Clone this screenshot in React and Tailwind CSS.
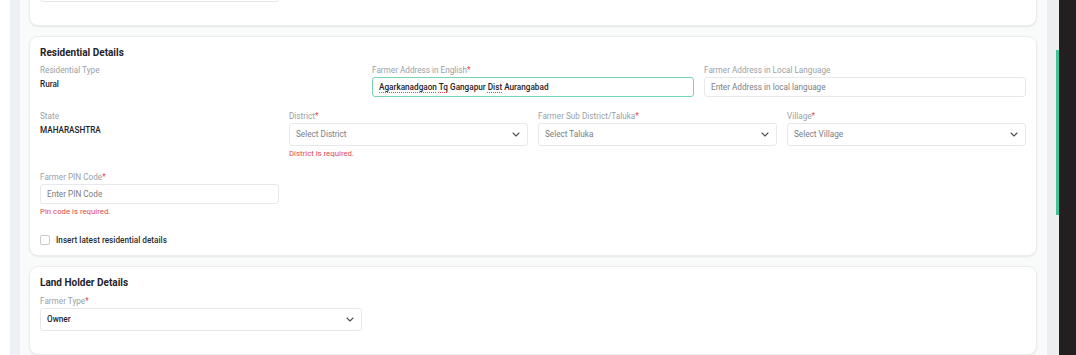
import React from "react";

const Chevron = () => (
  <svg width="8" height="5" viewBox="0 0 8 5" className="shrink-0">
    <polyline points="1,1 4,4 7,1" fill="none" stroke="#4b5058" strokeWidth="1.1" strokeLinecap="round" strokeLinejoin="round" />
  </svg>
);

const Label = ({ children, req }) => (
  <div className="h-[10px] text-[8.2px] leading-[10px] text-[#9a9fa6] mb-[2px] whitespace-nowrap">
    {children}
    {req && <span className="text-[#e5484d]">*</span>}
  </div>
);

const Input = ({ placeholder, value, focus }) => (
  <div
    className={`h-[20px] flex items-center rounded-[3px] border bg-white pl-[6px] text-[8.2px] ${
      focus ? "border-[#74d6b1]" : "border-[#e6e8eb]"
    }`}
  >
    {value ? (
      <span className="text-[#1f2328] font-medium">{value}</span>
    ) : (
      <span className="text-[#7a7e84]">{placeholder}</span>
    )}
  </div>
);

const Select = ({ placeholder, value }) => (
  <div className="h-[23px] flex items-center justify-between rounded-[3px] border border-[#e6e8eb] bg-white pl-[6px] pr-[7px] text-[8.2px]">
    {value ? (
      <span className="text-[#1f2328] font-medium">{value}</span>
    ) : (
      <span className="text-[#7a7e84]">{placeholder}</span>
    )}
    <Chevron />
  </div>
);

const Err = ({ children }) => (
  <div className="mt-[3px] h-[10px] text-[7.8px] leading-[10px] text-[#e5484d]">{children}</div>
);

const Card = ({ children, className = "" }) => (
  <div className={`rounded-[9px] border border-[#ececee] bg-white shadow-[0_1px_2px_rgba(0,0,0,0.08)] px-[10px] ${className}`}>
    {children}
  </div>
);

const Title = ({ children }) => (
  <div className="h-[12px] text-[10px] leading-[12px] font-bold text-[#1f2328]">{children}</div>
);

const Spell = ({ children }) => (
  <span className="underline decoration-dotted decoration-[#e5484d] underline-offset-[2px]">{children}</span>
);

export default function App() {
  return (
    <div
      className="flex h-[355px] w-[1076px] overflow-hidden bg-white"
      style={{ fontFamily: "Roboto, 'Liberation Sans', sans-serif" }}
    >
      <div className="w-[10px] bg-white" />
      <div className="w-[10px] bg-[#eef1f3]" />
      <div className="flex-1 bg-[#f9fafa] pl-[9px] pr-[10px] flex flex-col gap-[10px]">
        <Card className="mt-[-39px] pt-[20px] pb-[23px]">
          <div className="grid grid-cols-4 gap-[10px]">
            <Input placeholder="" />
          </div>
        </Card>

        <Card className="pt-[10px] pb-[10px]">
          <Title>Residential Details</Title>
          <div className="mt-[6px] grid grid-cols-3 gap-x-[10px]">
            <div>
              <Label>Residential Type</Label>
              <div className="h-[12px] mt-[3px] text-[8.2px] leading-[12px] font-medium text-[#1f2328]">Rural</div>
            </div>
            <div>
              <Label req>Farmer Address in English</Label>
              <Input
                focus
                value={
                  <span>
                    <Spell>Agarkanadgaon</Spell> <Spell>Tq</Spell> Gangapur <Spell>Dist</Spell> Aurangabad
                  </span>
                }
              />
            </div>
            <div>
              <Label>Farmer Address in Local Language</Label>
              <Input placeholder="Enter Address in local language" />
            </div>
          </div>

          <div className="mt-[14px] grid grid-cols-4 gap-x-[10px]">
            <div>
              <Label>State</Label>
              <div className="h-[12px] mt-[3px] text-[8.2px] leading-[12px] font-medium text-[#1f2328]">MAHARASHTRA</div>
            </div>
            <div>
              <Label req>District</Label>
              <Select placeholder="Select District" />
              <Err>District is required.</Err>
            </div>
            <div>
              <Label req>Farmer Sub District/Taluka</Label>
              <Select placeholder="Select Taluka" />
            </div>
            <div>
              <Label req>Village</Label>
              <Select placeholder="Select Village" />
            </div>
          </div>

          <div className="mt-[13px] grid grid-cols-4 gap-x-[10px]">
            <div>
              <Label req>Farmer PIN Code</Label>
              <Input placeholder="Enter PIN Code" />
              <Err>Pin code is required.</Err>
            </div>
          </div>

          <div className="mt-[18px] flex items-center gap-[6px]">
            <div className="h-[10px] w-[10px] rounded-[2px] border border-[#c9ccd1] bg-white" />
            <span className="text-[8.2px] leading-[10px] font-medium text-[#2a2d31]">Insert latest residential details</span>
          </div>
        </Card>

        <Card className="pt-[10px] pb-[23px]">
          <Title>Land Holder Details</Title>
          <div className="mt-[7px] grid grid-cols-3 gap-x-[10px]">
            <div>
              <Label req>Farmer Type</Label>
              <Select value="Owner" />
            </div>
          </div>
        </Card>
      </div>
      <div className="w-[12px] bg-[#eceef0] flex justify-end">
        <div className="mt-[50px] h-[165px] w-[3px] bg-[#3fc397]" />
      </div>
      <div className="w-[17px] bg-[#231f20]" />
    </div>
  );
}
